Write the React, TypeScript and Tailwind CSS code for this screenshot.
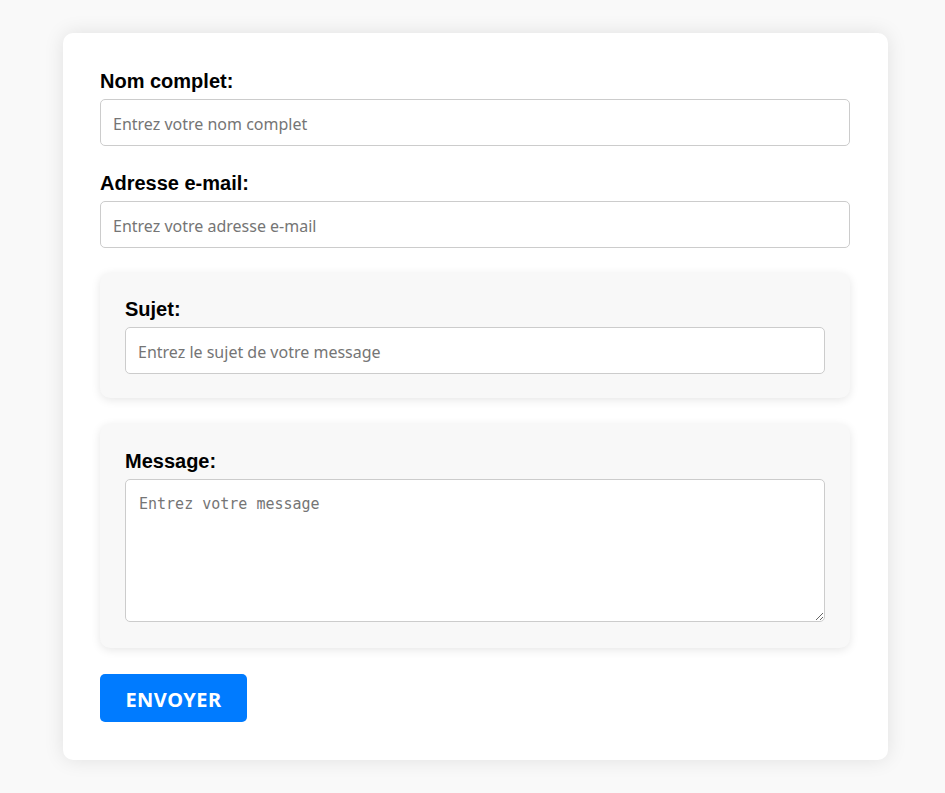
export default function App() {
  const labelCls =
    "mb-[6px] block text-[20px] leading-[23px] font-bold text-black [font-family:'Liberation_Sans',Arial,sans-serif]";
  const inputCls =
    "block h-[47px] w-full rounded-[5px] border border-[#cccccc] bg-white px-3 pt-[2px] text-[16px] text-black outline-none placeholder:text-[#757575] [font-family:'Noto_Sans',sans-serif]";

  return (
    <div className="min-h-[793px] w-full bg-[#f9f9f9] pt-[33px] pl-[63px]">
      <form
        className="w-[825px] rounded-[10px] bg-white pt-[37px] pr-[38px] pb-[38px] pl-[37px] shadow-[0_0_20px_rgba(0,0,0,0.1)]"
        onSubmit={(e) => e.preventDefault()}
      >
        <div>
          <label className={labelCls}>Nom complet:</label>
          <input className={inputCls} placeholder="Entrez votre nom complet" />
        </div>

        <div className="mt-[26px]">
          <label className={labelCls}>Adresse e-mail:</label>
          <input className={inputCls} type="email" placeholder="Entrez votre adresse e-mail" />
        </div>

        <div className="mt-[25px] rounded-[10px] bg-[#f8f8f8] px-[25px] pt-[25px] pb-[24px] shadow-[0_2px_10px_rgba(0,0,0,0.1)]">
          <label className={labelCls}>Sujet:</label>
          <input className={inputCls} placeholder="Entrez le sujet de votre message" />
        </div>

        <div className="mt-[26px] rounded-[10px] bg-[#f8f8f8] px-[25px] pt-[26px] pb-[26px] shadow-[0_2px_10px_rgba(0,0,0,0.1)]">
          <label className={labelCls}>Message:</label>
          <textarea
            className="block h-[143px] w-full rounded-[5px] border border-[#cccccc] bg-white px-[13px] pt-[15px] pb-3 text-[15px] leading-[18px] text-black outline-none placeholder:text-[#757575] [font-family:'DejaVu_Sans_Mono',monospace]"
            placeholder="Entrez votre message"
          />
        </div>

        <button
          type="submit"
          className="mt-[26px] h-[48px] w-[147px] rounded-[5px] bg-[#007bff] pt-[4px] text-[20px] font-bold tracking-[0.5px] text-white [font-family:'Noto_Sans',sans-serif]"
        >
          ENVOYER
        </button>
      </form>
    </div>
  );
}
